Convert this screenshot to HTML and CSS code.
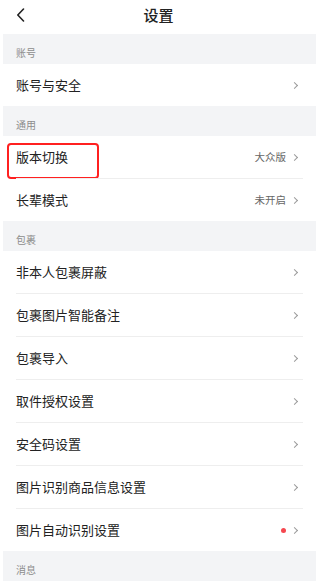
FILE: index.html
```html
<!DOCTYPE html>
<html lang="zh">
<head>
<meta charset="utf-8">
<title>设置</title>
<link rel="stylesheet" href="styles.css">
</head>
<body>
<div class="page">
  <header class="navbar">
    <span class="back">
      <svg width="9" height="14" viewBox="0 0 9 14"><path d="M7.5 1 L1.8 7 L7.5 13" fill="none" stroke="#222" stroke-width="1.6" stroke-linecap="round" stroke-linejoin="round"/></svg>
    </span>
    <h1 class="title">设置</h1>
  </header>

  <div class="list">
    <div class="group-title">账号</div>
    <div class="group">
      <div class="row"><span class="label">账号与安全</span><span class="extra"><i class="chev"></i></span></div>
    </div>

    <div class="group-title">通用</div>
    <div class="group">
      <div class="row highlight"><span class="label">版本切换</span><span class="extra"><span class="value">大众版</span><i class="chev"></i></span></div>
      <div class="row"><span class="label">长辈模式</span><span class="extra"><span class="value">未开启</span><i class="chev"></i></span></div>
    </div>

    <div class="group-title">包裹</div>
    <div class="group">
      <div class="row"><span class="label">非本人包裹屏蔽</span><span class="extra"><i class="chev"></i></span></div>
      <div class="row"><span class="label">包裹图片智能备注</span><span class="extra"><i class="chev"></i></span></div>
      <div class="row"><span class="label">包裹导入</span><span class="extra"><i class="chev"></i></span></div>
      <div class="row"><span class="label">取件授权设置</span><span class="extra"><i class="chev"></i></span></div>
      <div class="row"><span class="label">安全码设置</span><span class="extra"><i class="chev"></i></span></div>
      <div class="row"><span class="label">图片识别商品信息设置</span><span class="extra"><i class="chev"></i></span></div>
      <div class="row"><span class="label">图片自动识别设置</span><span class="extra"><span class="dot"></span><i class="chev"></i></span></div>
    </div>

    <div class="group-title">消息</div>
  </div>
</div>
</body>
</html>
```

FILE: styles.css
```css
html, body {
  margin: 0;
  padding: 0;
  background: #ffffff;
}
body {
  font-family: "Noto Sans CJK SC", "Noto Sans", sans-serif;
  color: #222222;
  width: 317px;
  overflow: hidden;
}
.page {
  display: flex;
  flex-direction: column;
}
.navbar {
  height: 34px;
  display: flex;
  align-items: center;
  justify-content: center;
  position: relative;
}
.back {
  position: absolute;
  left: 16px;
  top: 8px;
  display: flex;
}
.title {
  margin: 0;
  font-size: 15px;
  font-weight: 500;
  line-height: 20px;
  color: #222;
  margin-top: -4px;
}
.list {
  margin-left: 3px;
  margin-right: 1px;
  display: flex;
  flex-direction: column;
}
.group-title {
  height: 30px;
  box-sizing: border-box;
  background: #f3f4f6;
  padding: 12px 0 0 13px;
  font-size: 10px;
  line-height: 14px;
  color: #8c8c8c;
}
.group {
  display: flex;
  flex-direction: column;
  background: #fff;
}
.row {
  height: 42px;
  display: flex;
  align-items: center;
  justify-content: space-between;
  padding: 0 17px 0 13px;
  position: relative;
}
.row + .row {
  border-top: 1px solid #eeeeee;
  margin-left: 13px;
  margin-right: 13px;
  padding-left: 0;
  padding-right: 4px;
}
.label {
  font-size: 13px;
  line-height: 18px;
  color: #222;
}
.extra {
  display: flex;
  align-items: center;
  gap: 6px;
}
.value {
  font-size: 10.5px;
  color: #666;
  line-height: 14px;
}
.chev {
  display: inline-block;
  width: 4px;
  height: 4px;
  border-top: 1.2px solid #9a9a9a;
  border-right: 1.2px solid #9a9a9a;
  transform: rotate(45deg);
  margin-right: 2px;
}
.dot {
  width: 5px;
  height: 5px;
  border-radius: 50%;
  background: #f5474f;
}
.highlight::after {
  content: "";
  position: absolute;
  box-sizing: border-box;
  left: 4px;
  top: 7px;
  width: 92px;
  height: 36px;
  border: 2px solid #ff2020;
  border-radius: 4px;
}
```
